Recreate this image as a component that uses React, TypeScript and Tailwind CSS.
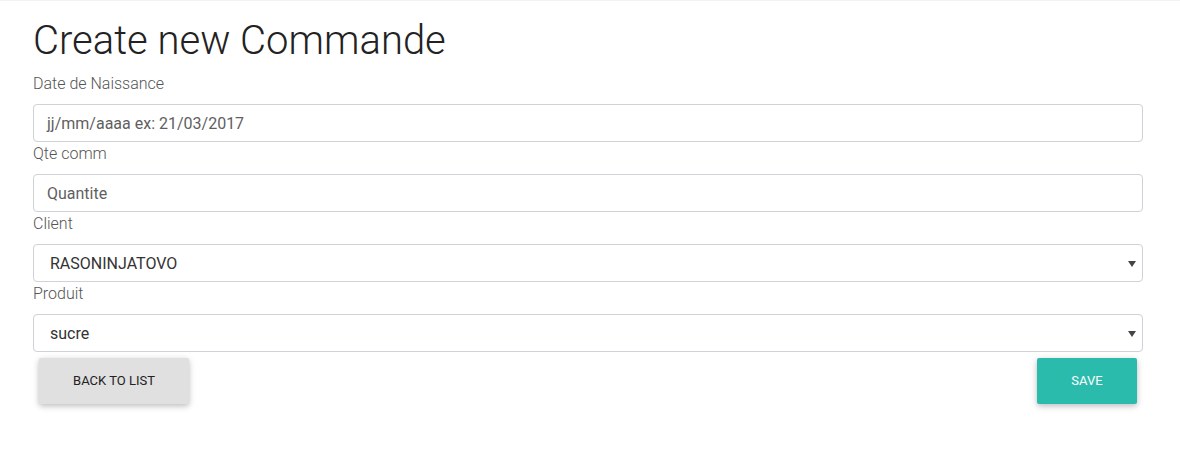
import React from "react";

const font = { fontFamily: "Roboto, 'Liberation Sans', sans-serif" };

function Label({ children }: { children: React.ReactNode }) {
  return (
    <div className="h-[32px] text-[16px] font-light leading-[24px] text-[#555]">{children}</div>
  );
}

function Caret() {
  return (
    <svg width="8" height="6" viewBox="0 0 8 6" className="absolute right-[6px] top-[16px]">
      <path d="M0 0 H8 L4 6 Z" fill="#444" />
    </svg>
  );
}

export default function App() {
  return (
    <div className="min-h-[467px] w-full bg-white" style={font}>
      <div className="h-[1px] w-full bg-[#f3f3f3]" />
      <div className="mx-auto w-[1110px] translate-x-[-2px]">
        <h1 className="pt-[18px] pb-[9px] text-[40px] font-light leading-[44px] text-[#222]">
          Create new Commande
        </h1>
        <Label>Date de Naissance</Label>
        <div className="flex h-[38px] items-center rounded-[4px] border border-[#cfd2d6] px-[13px] pt-[2px] text-[16px] text-[#5f5f5f]">
          jj/mm/aaaa ex: 21/03/2017
        </div>
        <Label>Qte comm</Label>
        <div className="flex h-[38px] items-center rounded-[4px] border border-[#cfd2d6] px-[13px] pt-[2px] text-[16px] text-[#5f5f5f]">
          Quantite
        </div>
        <Label>Client</Label>
        <div className="relative flex h-[38px] items-center rounded-[4px] border border-[#cfd2d6] px-[16px] pt-[2px] text-[16px] text-[#333]">
          RASONINJATOVO
          <Caret />
        </div>
        <Label>Produit</Label>
        <div className="relative flex h-[38px] items-center rounded-[4px] border border-[#cfd2d6] px-[16px] pt-[2px] text-[16px] text-[#333]">
          sucre
          <Caret />
        </div>
        <div className="mt-[6px] flex justify-between px-[6px]">
          <button className="flex h-[46px] w-[150px] items-center justify-center rounded-[2px] bg-[#e0e0e0] text-[13px] uppercase text-[#222] shadow-[0_2px_5px_rgba(0,0,0,0.16),0_2px_8px_rgba(0,0,0,0.12)]">
            Back to list
          </button>
          <button className="flex h-[46px] w-[100px] items-center justify-center rounded-[2px] bg-[#2bbbad] text-[13px] uppercase text-white shadow-[0_2px_5px_rgba(0,0,0,0.16),0_2px_8px_rgba(0,0,0,0.12)]">
            Save
          </button>
        </div>
      </div>
    </div>
  );
}
